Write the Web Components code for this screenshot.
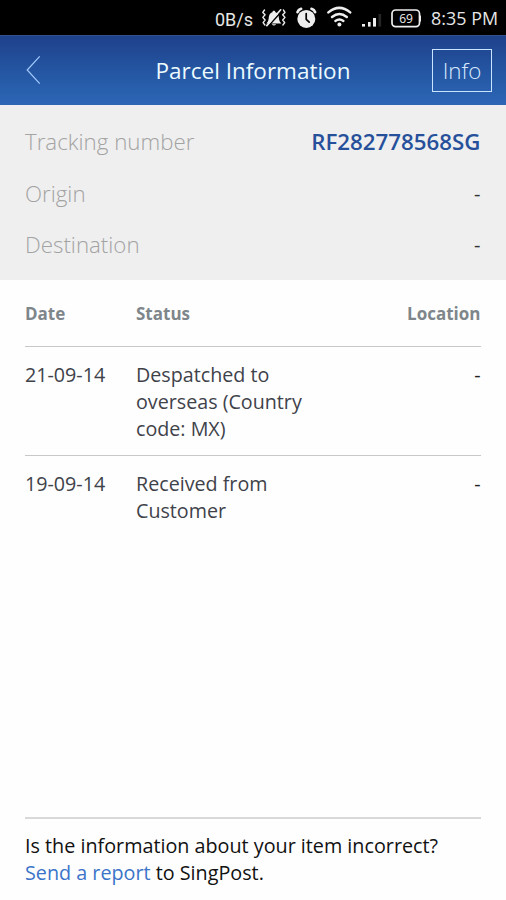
<!DOCTYPE html>
<html lang="en">
<head>
<meta charset="utf-8">
<title>Parcel Information</title>
<style>
html,body{margin:0;height:100%;background:#fefefe}
body{font-family:"Open Sans","Noto Sans",sans-serif;overflow:hidden}
</style>
</head>
<body>
<parcel-app></parcel-app>
<script>
function define(name, html) {
  const template = document.createElement('template');
  template.innerHTML = html;
  customElements.define(name, class extends HTMLElement {
    constructor() {
      super();
      this.attachShadow({ mode: 'open' }).append(template.content.cloneNode(true));
    }
  });
}

define('status-bar', `
<style>
:host{display:flex;align-items:center;box-sizing:border-box;height:35px;padding:2px 8px 0 215px;background:#000;color:#e6e6e6;font:400 18px/33px Roboto,sans-serif;white-space:nowrap}
svg{display:block;flex:none}
.net{width:46px;padding-top:2px}
.clock{margin-left:auto;font-family:"Open Sans",sans-serif;font-size:17.9px}
</style>
<span class="net">0B/s</span>
<svg width="160" height="33" viewBox="261 2 160 33" fill="none" stroke="#eee" stroke-linecap="round" stroke-linejoin="round">
  <g stroke-width="1.4">
    <path d="M264.5 10l-1.7 2.4 2.3 2.4-2.3 2.6 2.3 2.6-2 2.6 1.8 2.4"/>
    <path d="M283.3 10l1.7 2.4-2.3 2.4 2.3 2.6-2.3 2.6 2 2.6-1.8 2.4"/>
  </g>
  <path d="M266.4 23.4c2.4-2 2-4.2 2.5-6.8.4-2.5 1.7-3.9 3.5-4.4.3-1.9 2.7-1.9 3 0 1.7.5 2.9 1.8 3.2 3.6.5 3 .2 5.5 2.8 7.6z" fill="#eee" stroke="none"/>
  <path d="M271.6 24.2h4.6q-2.2 2.4-4.6 0z" fill="#eee" stroke="none"/>
  <path d="M268.2 26.3L282.2 10.8" stroke="#000" stroke-width="1.5"/>
  <path d="M266.8 25.6L280.7 9.8" stroke-width="1.7"/>
  <circle cx="306.3" cy="18.9" r="9" fill="#eee" stroke="none"/>
  <path d="M297.5 12.2q.8-2.6 3.6-3.4M315.1 12.2q-.8-2.6-3.6-3.4" stroke-width="2.7"/>
  <path d="M306.2 13.5v5.8l3 2.9" stroke="#000" stroke-width="1.7"/>
  <g stroke-width="2.5">
    <path d="M328.4 12.4q10.9-9 21.8 0"/>
    <path d="M332 16.9q7.4-5.8 14.8 0"/>
    <path d="M335.4 20.9q4-2.8 8 0"/>
  </g>
  <circle cx="339.4" cy="24.4" r="2" fill="#eee" stroke="none"/>
  <g fill="#eee" stroke="none">
    <rect x="362" y="24" width="3" height="2.6"/><rect x="368" y="22" width="2.6" height="4.6"/><rect x="373" y="18" width="3" height="8.6"/><rect x="378.5" y="14" width="2.6" height="12.6" fill="#262626"/>
    <rect x="419.5" y="15.5" width="2" height="6"/>
  </g>
  <rect x="392" y="10" width="27.5" height="16.6" rx="3.6" stroke-width="1.7"/>
  <text x="406" y="22.8" text-anchor="middle" font-family="Open Sans,sans-serif" font-size="12" font-weight="400" fill="#eee" stroke="none">69</text>
</svg>
<span class="clock">8:35 PM</span>`);

define('nav-bar', `
<style>
:host{display:grid;grid-template-columns:1fr auto 1fr;align-items:center;box-sizing:border-box;height:70px;padding:0 14px 0 26px;border-top:1px solid #31518f;background:linear-gradient(#1f418b,#2559a6 60%,#2d67b6);color:#ecfbff;font-size:22.5px;line-height:69px}
svg{display:block;margin-top:-1px}
.title{transform:translateX(-6px)}
.info{justify-self:end;box-sizing:border-box;width:60px;height:43px;border:1px solid #c9e4ff;font-size:22.4px;font-weight:300;line-height:42px;text-align:center;color:#d9eaff}
</style>
<svg width="16" height="30" viewBox="0 0 16 30" fill="none" stroke="#a3caff" stroke-width="1.2"><path d="M13.7 1.3L1.2 15l12.5 13.7"/></svg>
<span class="title"><slot></slot></span>
<span class="info"><slot name="action"></slot></span>`);

define('detail-row', `
<style>
:host{display:flex;justify-content:space-between;height:51.35px;line-height:51.35px;font-size:22.3px;font-weight:300;color:#a3a3a3}
::slotted([slot=value]){font-size:20px;font-weight:400;color:#333}
::slotted(.code){font-size:22.3px!important;font-weight:600!important;color:#27509b!important}
</style>
<span><slot></slot></span><slot name="value"></slot>`);

define('detail-panel', `
<style>:host{display:block;box-sizing:border-box;height:175px;padding:11.4px 25.5px 0 25px;background:#efefef}</style>
<slot></slot>`);

define('event-head', `
<style>
:host{display:grid;grid-template-columns:111px 1fr auto;box-sizing:border-box;height:67px;padding-top:1px;border-bottom:1px solid #c8c8c8;font-size:17px;font-weight:700;line-height:66px;color:#7f868b}
</style>
<slot></slot>`);

define('event-row', `
<style>
:host{display:grid;grid-template-columns:111px 175px 1fr;padding:15px 0 12.8px;font-size:19.7px;line-height:26.75px;color:#40424a;border-bottom:1px solid #c8c8c8}
:host(:last-child){border:0}
.place{text-align:right;color:#222}
</style>
<slot name="date"></slot><span><slot></slot></span><span class="place"><slot name="place"></slot></span>`);

define('report-footer', `
<style>
:host{display:block;margin-top:auto;height:68.5px;padding-top:12.5px;border-top:2px solid #d9d9d9;font-size:19.75px;line-height:27px;color:#111}
</style>
<slot></slot>`);

define('parcel-app', `
<style>
:host{display:flex;flex-direction:column;height:900px}
main{flex:1;display:flex;flex-direction:column;padding:0 25.5px 0 25px}
.link{color:#3b74c9}
</style>
<status-bar></status-bar>
<nav-bar>Parcel Information<span slot="action">Info</span></nav-bar>
<detail-panel>
  <detail-row>Tracking number<span slot="value" class="code">RF282778568SG</span></detail-row>
  <detail-row>Origin<span slot="value">-</span></detail-row>
  <detail-row>Destination<span slot="value">-</span></detail-row>
</detail-panel>
<main>
  <event-head><span>Date</span><span>Status</span><span>Location</span></event-head>
  <section>
    <event-row><span slot="date">21-09-14</span>Despatched to overseas (Country code: MX)<span slot="place">-</span></event-row>
    <event-row><span slot="date">19-09-14</span>Received from Customer<span slot="place">-</span></event-row>
  </section>
  <report-footer>Is the information about your item incorrect?<br><span class="link">Send a report</span> to SingPost.</report-footer>
</main>`);
</script>
</body>
</html>
